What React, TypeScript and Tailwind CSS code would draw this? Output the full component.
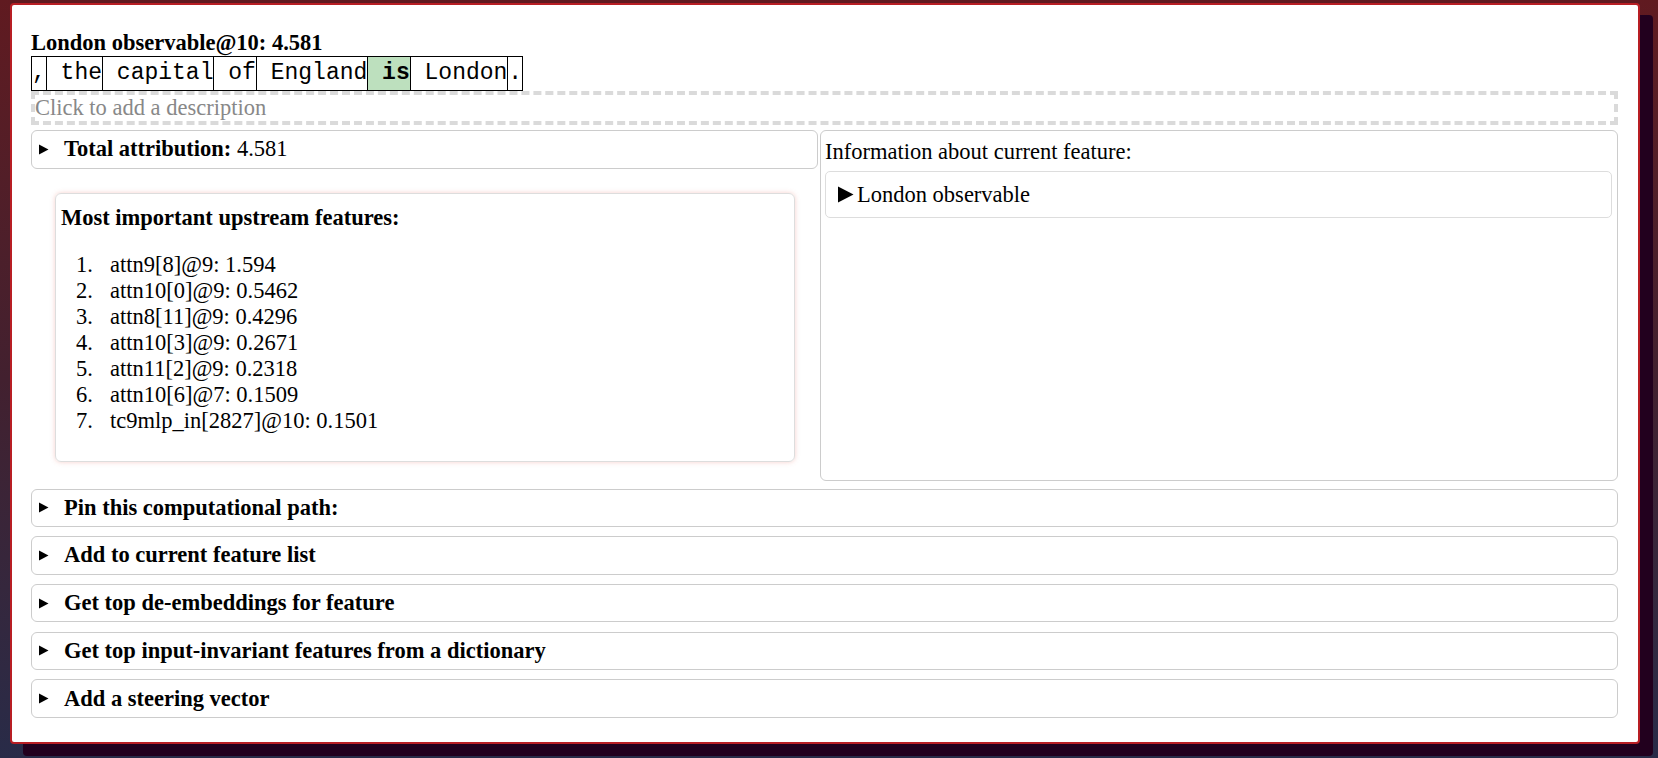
import React from 'react';

const tokens = [',', ' the', ' capital', ' of', ' England', ' is', ' London', '.'];

const upstream = [
    'attn9[8]@9: 1.594',
    'attn10[0]@9: 0.5462',
    'attn8[11]@9: 0.4296',
    'attn10[3]@9: 0.2671',
    'attn11[2]@9: 0.2318',
    'attn10[6]@7: 0.1509',
    'tc9mlp_in[2827]@10: 0.1501',
];

const sections = [
    'Pin this computational path:',
    'Add to current feature list',
    'Get top de-embeddings for feature',
    'Get top input-invariant features from a dictionary',
    'Add a steering vector',
];

const SmallArrow = () => (
    <svg width="10" height="11" viewBox="0 0 10 11" className="shrink-0">
        <polygon points="0,0.5 9.5,5.5 0,10.5" fill="#000" />
    </svg>
);

const Summary: React.FC<{ children: React.ReactNode }> = ({ children }) => (
    <div className="h-[38.5px] border border-[#cccccc] rounded-[6px] flex items-center pl-[7px]">
        <SmallArrow />
        <div className="ml-[15px] leading-[26px]">{children}</div>
    </div>
);

export default function App() {
    return (
        <div className="min-h-screen bg-gradient-to-b from-[#601a20] via-[#42202f] to-[#282b48] pt-[3px] pl-[10px] font-['Liberation_Serif',serif] text-[22.5px] text-black">
            <div className="w-[1630px] h-[741px] bg-white border-2 border-[#b81e24] rounded-[4px] shadow-[13px_12px_0_0_#22001e] pt-[25px] pl-[19px] pr-[20px]">
                <div className="font-bold leading-[26px]">London observable@10: 4.581</div>

                <div className="flex font-['Liberation_Mono',monospace] text-[23px]">
                    {tokens.map((t, i) => (
                        <span
                            key={i}
                            className={`whitespace-pre h-[35px] leading-[33px] border-y border-l border-black ${
                                i === tokens.length - 1 ? 'border-r' : ''
                            } ${t === ' is' ? 'bg-[#bde0be] font-bold' : ''}`}
                        >
                            {t}
                        </span>
                    ))}
                </div>

                <div className="border-4 border-dashed border-[#dadada] text-[#888888] leading-[26px]">
                    Click to add a description
                </div>

                <div className="flex gap-[2px] mt-[5px]">
                    <div className="w-[787px] shrink-0">
                        <Summary>
                            <b>Total attribution:</b> 4.581
                        </Summary>
                        <div className="mt-[24px] ml-[24px] mr-[23px] mb-[19px] h-[269px] border border-[#dddddd] rounded-[6px] shadow-[0_0_5px_rgba(230,120,110,0.35)] pt-[11px] px-[5px]">
                            <div className="font-bold leading-[26px]">Most important upstream features:</div>
                            <div className="mt-[21px]">
                                {upstream.map((u, i) => (
                                    <div key={i} className="flex leading-[26px] pl-[15px]">
                                        <span className="w-[34px] shrink-0">{i + 1}.</span>
                                        <span>{u}</span>
                                    </div>
                                ))}
                            </div>
                        </div>
                    </div>

                    <div className="flex-1 border border-[#cccccc] rounded-[6px] pt-[8px] px-[4px]">
                        <div className="leading-[26px]">Information about current feature:</div>
                        <div className="mt-[6px] mr-[1px] h-[47px] border border-[#dddddd] rounded-[5px] flex items-center pl-[12px]">
                            <svg width="16" height="17" viewBox="0 0 16 17" className="shrink-0">
                                <polygon points="0,0.5 15.5,8.5 0,16.5" fill="#000" />
                            </svg>
                            <span className="ml-[3px] leading-[26px]">London observable</span>
                        </div>
                    </div>
                </div>

                <div className="flex flex-col gap-[9.2px] mt-[8px]">
                    {sections.map(s => (
                        <Summary key={s}>
                            <b>{s}</b>
                        </Summary>
                    ))}
                </div>
            </div>
        </div>
    );
}
